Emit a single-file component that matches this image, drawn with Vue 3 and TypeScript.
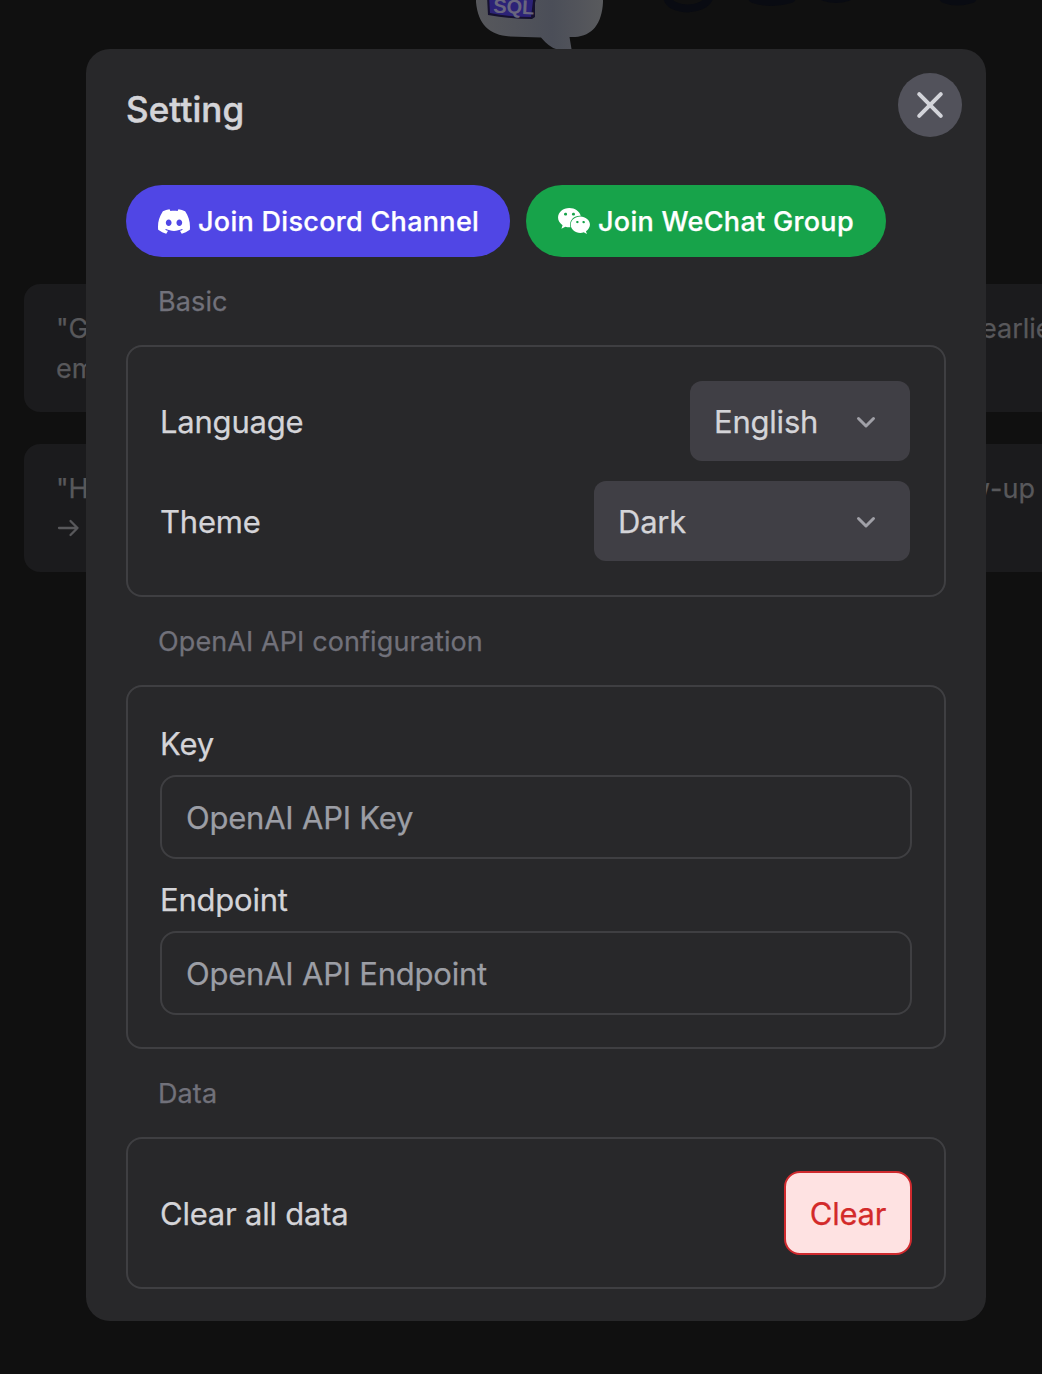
<script setup lang="ts">
import { ref } from 'vue'

interface SelectRow {
  label: string
  value: string
  width: number
}

interface Field {
  label: string
  placeholder: string
}

const selects: SelectRow[] = [
  { label: 'Language', value: 'English', width: 220 },
  { label: 'Theme', value: 'Dark', width: 316 },
]
const fields: Field[] = [
  { label: 'Key', placeholder: 'OpenAI API Key' },
  { label: 'Endpoint', placeholder: 'OpenAI API Endpoint' },
]
const values = ref<string[]>(['', ''])
</script>

<template>
  <div class="screen">
    <div class="page">
      <svg class="brand" width="1042" height="60" viewBox="0 0 1042 60">
        <defs>
          <linearGradient id="bubble" x1="0" x2="1" y1="0" y2="0">
            <stop offset="0" stop-color="#57585c" />
            <stop offset=".6" stop-color="#4b4e58" />
            <stop offset="1" stop-color="#595a5d" />
          </linearGradient>
        </defs>
        <path d="M476-10V2C478 24 489 35 510 36.500L541 37.500Q549 47 556 49H571.500L569.500 37H575C592 36 602 24 603 2V-10Z" fill="url(#bubble)" />
        <path d="M487-4L488 15Q510 19 532 19L535 17V3L537-4Z" fill="#15112f" />
        <path d="M489-4L490 13Q510 17 531 17L533 1V-4Z" fill="#2c2277" />
        <text x="493" y="12.500" transform="rotate(3 493 12)" class="brand-text">SQL</text>
        <g fill="none" stroke="#090b12" stroke-width="8" stroke-linecap="round">
          <path d="M668 0C674 12 704 11 709-2" />
          <path d="M753-1Q772 5 791-1" />
          <path d="M824-3Q836 1 848-3" />
          <path d="M944-1Q957 4 972-1" />
        </g>
      </svg>
      <div class="card"><p><span>"Get</span><span class="tail first">earlier</span></p><p>employee</p></div>
      <div class="card"><p><span>"How</span><span class="tail second">follow-up</span></p>
        <p><svg class="arrow" width="24" height="24" viewBox="0 0 24 24" fill="none" stroke="currentColor" stroke-width="2.300" stroke-linecap="round" stroke-linejoin="round"><path d="M3 12H21.500M14.500 5L21.500 12L14.500 19" /></svg></p>
      </div>
    </div>

    <section class="modal">
      <header>
        <h1>Setting</h1>
        <button class="close" aria-label="Close">
          <svg width="28" height="28" viewBox="0 0 28 28" fill="none" stroke="#d3d4da" stroke-width="4" stroke-linecap="round"><path d="M3.200 3.200L24.800 24.800M24.800 3.200L3.200 24.800" /></svg>
        </button>
      </header>

      <div class="community">
        <a class="pill discord">
          <svg width="32" height="25" viewBox="0 2.850 24 18.300" fill="#fff"><path d="M20.317 4.3698a19.7913 19.7913 0 00-4.8851-1.5152.0741.0741 0 00-.0785.0371c-.211.3753-.4447.8648-.6083 1.2495-1.8447-.2762-3.68-.2762-5.4868 0-.1636-.3933-.4058-.8742-.6177-1.2495a.077.077 0 00-.0785-.037 19.7363 19.7363 0 00-4.8852 1.515.0699.0699 0 00-.0321.0277C.5334 9.0458-.319 13.5799.0992 18.0578a.0824.0824 0 00.0312.0561c2.0528 1.5076 4.0413 2.4228 5.9929 3.0294a.0777.0777 0 00.0842-.0276c.4616-.6304.8731-1.2952 1.226-1.9942a.076.076 0 00-.0416-.1057c-.6528-.2476-1.2743-.5495-1.8722-.8923a.077.077 0 01-.0076-.1277c.1258-.0943.2517-.1923.3718-.2914a.0743.0743 0 01.0776-.0105c3.9278 1.7933 8.18 1.7933 12.0614 0a.0739.0739 0 01.0785.0095c.1202.099.246.1981.3728.2924a.077.077 0 01-.0066.1276 12.2986 12.2986 0 01-1.873.8914.0766.0766 0 00-.0407.1067c.3604.698.7719 1.3628 1.225 1.9932a.076.076 0 00.0842.0286c1.961-.6067 3.9495-1.5219 6.0023-3.0294a.077.077 0 00.0313-.0552c.5004-5.177-.8382-9.6739-3.5485-13.6604a.061.061 0 00-.0312-.0286zM8.02 15.3312c-1.1825 0-2.1569-1.0857-2.1569-2.419 0-1.3332.9555-2.4189 2.157-2.4189 1.2108 0 2.1757 1.0952 2.1568 2.419 0 1.3332-.9555 2.4189-2.1569 2.4189zm7.9748 0c-1.1825 0-2.1569-1.0857-2.1569-2.419 0-1.3332.9554-2.4189 2.1569-2.4189 1.2108 0 2.1757 1.0952 2.1568 2.419 0 1.3332-.946 2.4189-2.1568 2.4189Z" /></svg>
          <span>Join Discord Channel</span>
        </a>
        <a class="pill wechat">
          <svg width="32" height="26" viewBox="13 32 550 448" fill="#fff"><path d="M385.2 167.6c6.4 0 12.600.3 18.800 1.100C387.400 90.300 303.300 32 207.700 32 100.500 32 13 104.800 13 197.400c0 53.400 29.300 97.500 77.900 131.600l-19.300 58.600 68-34.100c24.400 4.800 43.800 9.700 68.200 9.700 6.200 0 12.100-.3 18.300-.8-4-12.900-6.200-26.600-6.200-40.800-.1-84.900 72.900-154 165.300-154zm-104.500-52.900c14.500 0 24.200 9.700 24.200 24.400 0 14.500-9.700 24.200-24.200 24.200-14.800 0-29.300-9.700-29.300-24.200.1-14.700 14.600-24.400 29.300-24.400zm-136.400 48.600c-14.500 0-29.300-9.700-29.300-24.200 0-14.800 14.800-24.400 29.300-24.400 14.800 0 24.400 9.700 24.400 24.400 0 14.600-9.600 24.200-24.400 24.200zM563 319.400c0-77.900-77.900-141.300-165.400-141.300-92.700 0-165.400 63.400-165.400 141.300S305 460.700 397.600 460.700c19.300 0 38.900-5.100 58.600-9.900l53.400 29.300-14.800-48.600C534 402.100 563 363.200 563 319.400zm-219.100-24.500c-9.700 0-19.300-9.700-19.300-19.600 0-9.700 9.700-19.300 19.300-19.300 14.800 0 24.400 9.700 24.400 19.300 0 10-9.700 19.600-24.400 19.600zm107.100 0c-9.700 0-19.300-9.700-19.300-19.600 0-9.700 9.700-19.300 19.300-19.300 14.500 0 24.400 9.700 24.400 19.300.1 10-9.900 19.600-24.400 19.600z" /></svg>
          <span>Join WeChat Group</span>
        </a>
      </div>

      <h2>Basic</h2>
      <div class="group basic">
        <div v-for="row in selects" :key="row.label" class="row">
          <span>{{ row.label }}</span>
          <button class="select" :style="{ width: row.width + 'px' }">
            <span>{{ row.value }}</span>
            <svg width="20" height="16" viewBox="0 0 20 16" fill="none" stroke="#a0a0a7" stroke-width="3" stroke-linecap="round" stroke-linejoin="round"><path d="M2.500 5.500L10 13L17.500 5.500" /></svg>
          </button>
        </div>
      </div>

      <h2>OpenAI API configuration</h2>
      <div class="group api">
        <label v-for="(field, i) in fields" :key="field.label">
          <span class="name">{{ field.label }}</span>
          <input v-model="values[i]" type="text" :placeholder="field.placeholder" />
        </label>
      </div>

      <h2>Data</h2>
      <div class="group data">
        <span>Clear all data</span>
        <button class="clear">Clear</button>
      </div>
    </section>
  </div>
</template>

<style>
body { background: #101010; }
</style>

<style scoped>
* { box-sizing: border-box; }
.screen {
  position: relative;
  width: 1042px;
  height: 1374px;
  overflow: hidden;
  background: #101010;
  color: #d4d4d8;
  font-family: Inter, "Liberation Sans", sans-serif;
  font-size: 31px;
  font-weight: 400;
  letter-spacing: -0.22px;
  -webkit-text-stroke: 0.25px currentColor;
}
button, input { font: inherit; color: inherit; letter-spacing: inherit; margin: 0; border: 0; }
h1, h2, p { margin: 0; font-weight: inherit; }
svg { display: block; flex: none; }
.page { display: flex; flex-direction: column; gap: 32px; padding-left: 24px; color: #58585b; }
.brand { margin: 0 0 192px -24px; }
.brand-text { font: 700 20px "Liberation Sans", sans-serif; letter-spacing: 0; fill: #69667e; -webkit-text-stroke: 0; }
.card {
  width: 1100px;
  height: 128px;
  padding: 25px 32px 23px;
  border-radius: 16px;
  background: #1b1b1d;
  font-size: 27px;
  line-height: 40px;
  letter-spacing: 0;
}
.card p { display: flex; height: 40px; align-items: center; }
.arrow { position: relative; top: -1px; }
.tail { position: absolute; }
.first { left: 981px; }
.second { right: 7px; }
.modal {
  position: absolute;
  left: 86px;
  top: 49px;
  width: 900px;
  height: 1272px;
  padding: 24px 40px 32px;
  border-radius: 24px;
  background: #28282a;
}
header { display: flex; justify-content: space-between; height: 112px; }
h1 { font-size: 35px; font-weight: 500; line-height: 72px; letter-spacing: 0.1px; -webkit-text-stroke: 0.5px currentColor; }
.close {
  display: grid;
  place-items: center;
  width: 64px;
  height: 64px;
  padding: 0;
  margin-right: -16px;
  border-radius: 50%;
  background: #52525b;
}
.community { display: flex; gap: 16px; }
.pill {
  display: flex;
  align-items: center;
  gap: 8px;
  height: 72px;
  padding: 0 32px;
  border-radius: 36px;
  color: #fff;
  font-size: 27px;
  font-weight: 500;
  letter-spacing: 0.3px;
  white-space: nowrap;
}
.discord { width: 384px; background: #5046e5; }
.wechat { width: 360px; background: #17a34a; }
h2 { height: 88px; padding-left: 32px; color: #71717a; font-size: 27px; line-height: 90px; letter-spacing: 0.1px; }
.group { border: 2px solid #3f3f42; border-radius: 16px; }
.basic { display: flex; flex-direction: column; gap: 20px; height: 252px; padding: 34px 34px 34px 32px; }
.row { display: flex; align-items: center; justify-content: space-between; }
.select {
  display: flex;
  align-items: center;
  justify-content: space-between;
  height: 80px;
  padding: 0 34px 0 24px;
  border-radius: 12px;
  background: #403f45;
}
.api { display: flex; flex-direction: column; gap: 16px; height: 364px; padding: 32px; }
label { display: flex; flex-direction: column; }
.name { height: 56px; line-height: 50px; }
input {
  width: 752px;
  height: 84px;
  padding: 0 24px;
  border: 2px solid #3f3f42;
  border-radius: 16px;
  background: transparent;
  outline: none;
}
input::placeholder { color: #9c9ea5; opacity: 1; -webkit-text-stroke: 0.25px #9c9ea5; }
.data { display: flex; align-items: center; justify-content: space-between; height: 152px; padding: 0 32px; }
.clear {
  width: 128px;
  height: 84px;
  padding: 0;
  border: 2px solid #cf2a2e;
  border-radius: 16px;
  background: #fee2e2;
  color: #d32a2a;
  -webkit-text-stroke: 0.25px #d32a2a;
}
</style>
